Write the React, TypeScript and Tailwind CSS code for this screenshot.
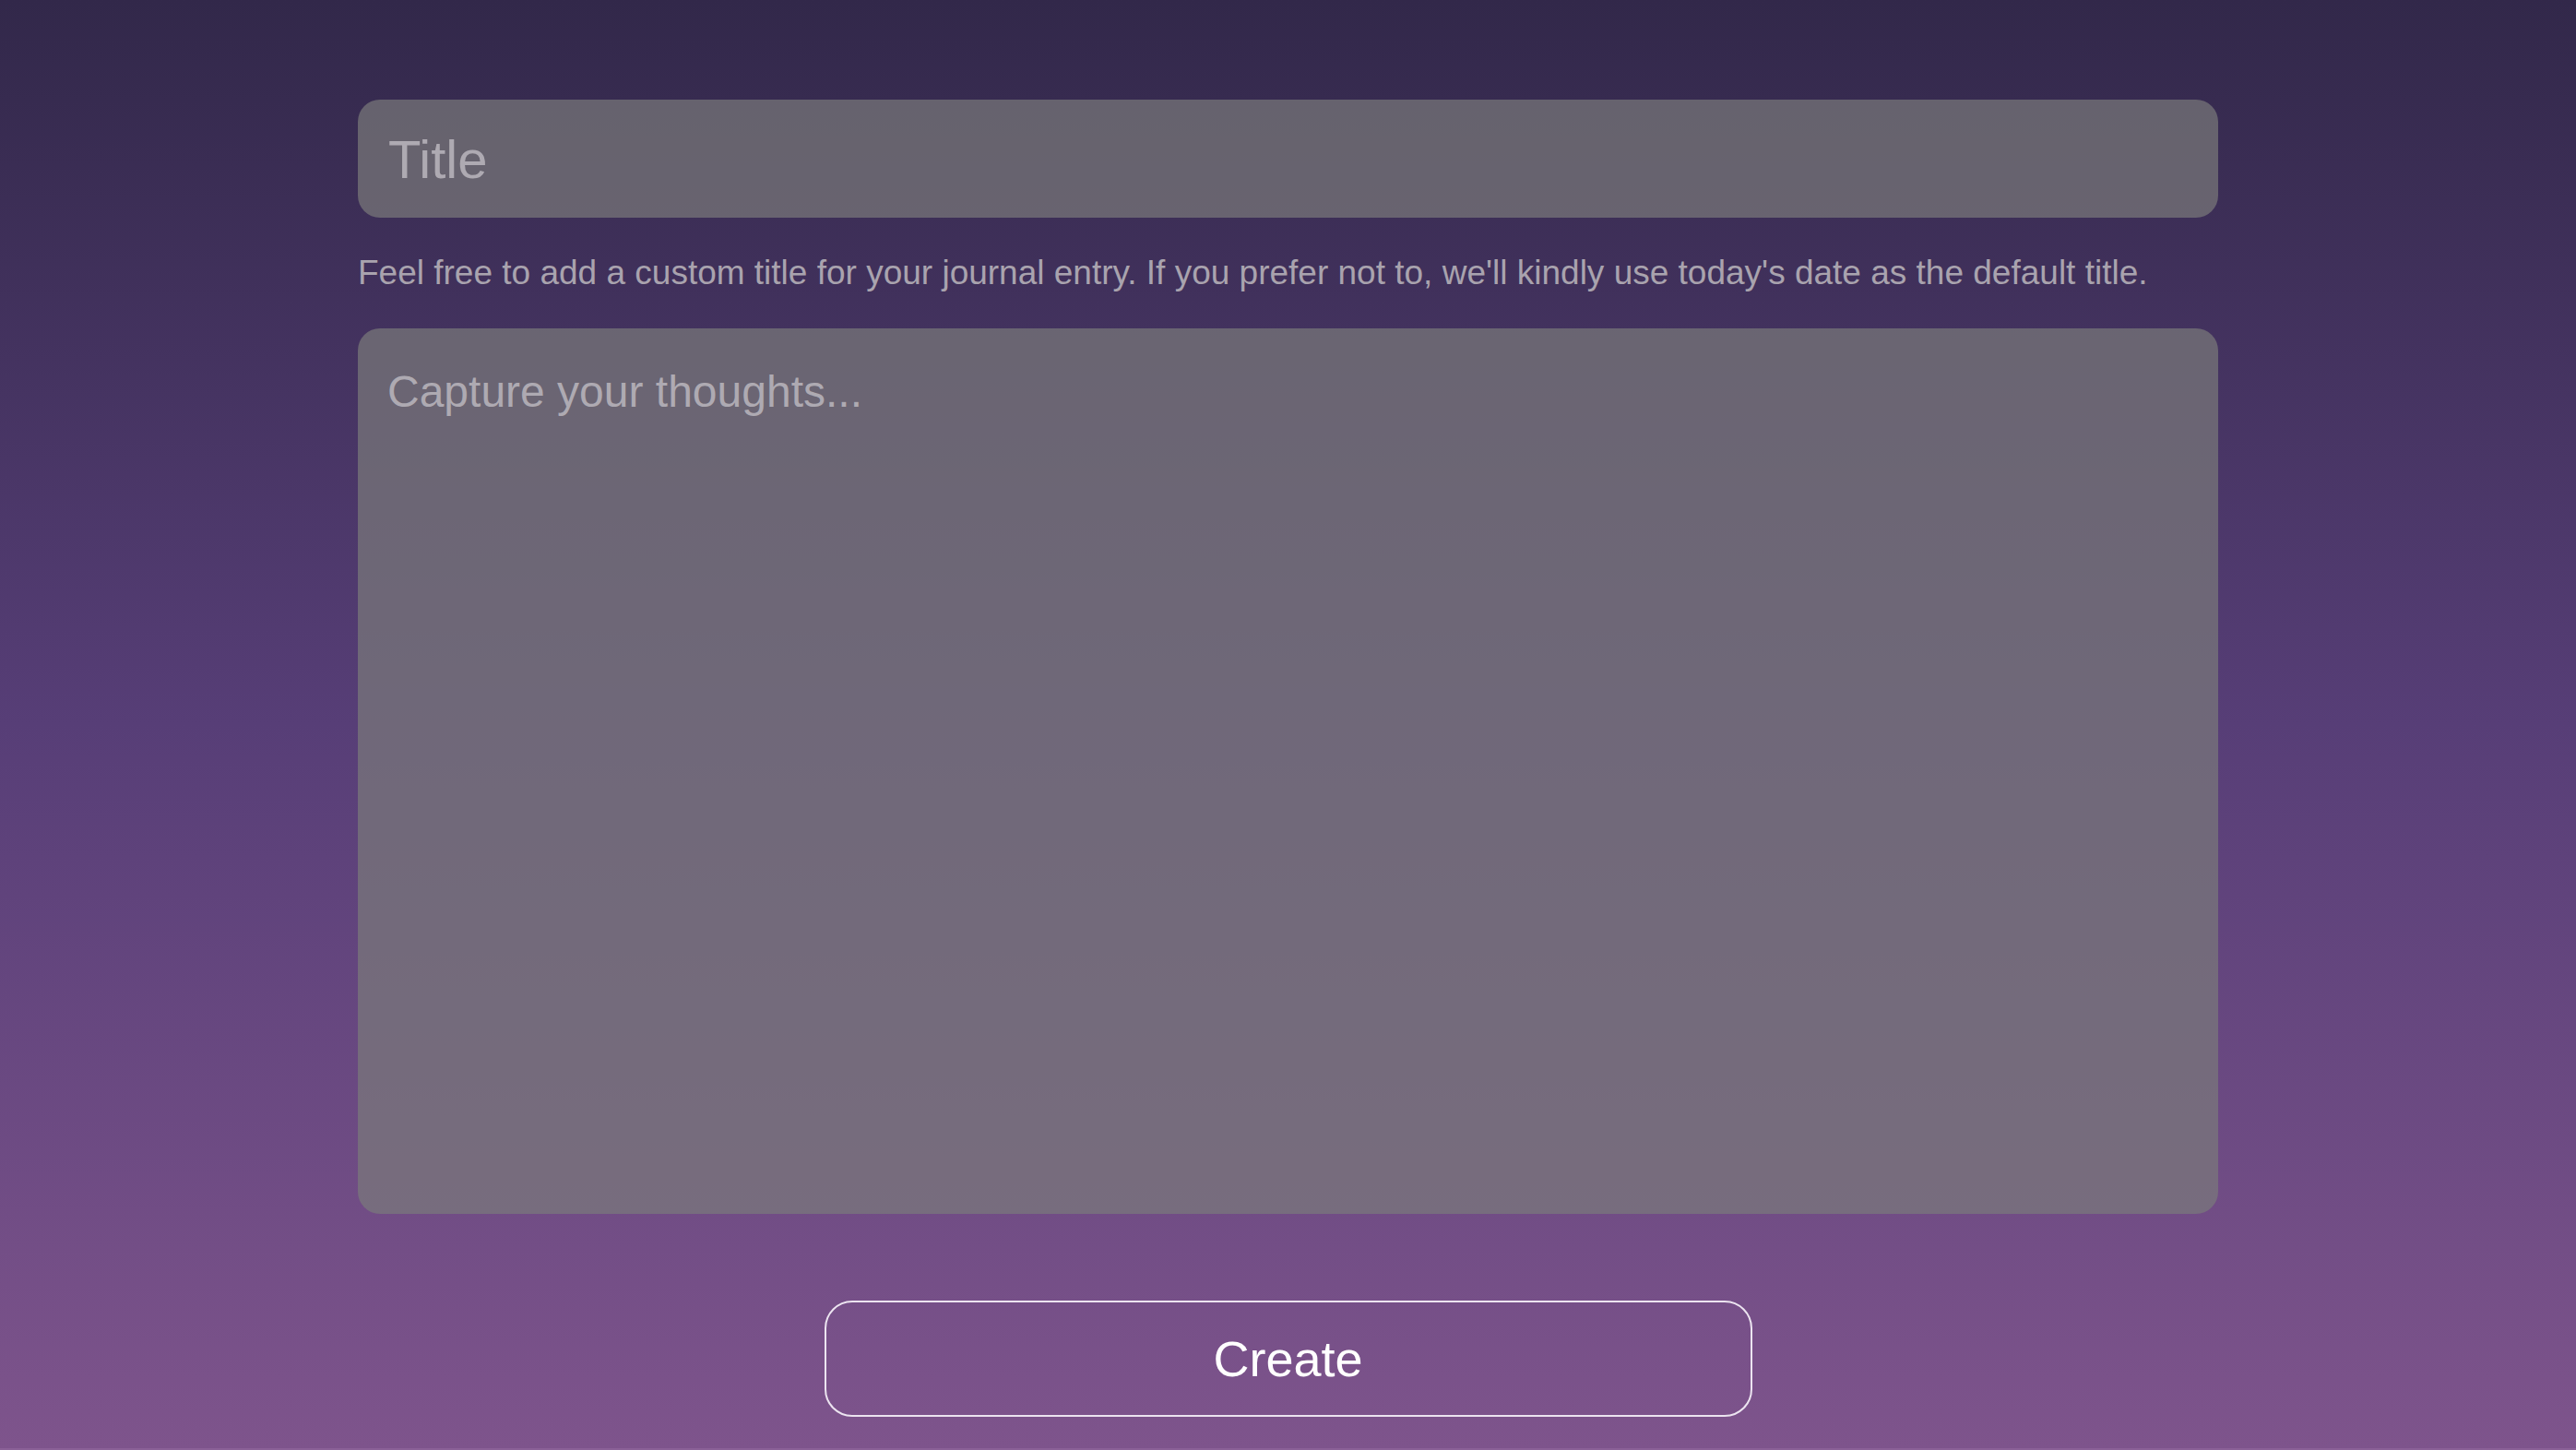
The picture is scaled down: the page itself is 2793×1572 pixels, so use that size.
import { useState } from "react";

export default function App() {
  const [title, setTitle] = useState("");
  const [body, setBody] = useState("");

  return (
    <div className="w-full min-h-screen bg-[#8a6197] font-['Liberation_Sans',Arial,sans-serif]">
      <main className="flex flex-col items-center w-full h-[1570px] pt-[108px] bg-linear-to-b from-[#32284a] via-[#573e77] to-[#7e548c]">
        <div className="flex flex-col w-[2017px]">
          <input
            value={title}
            onChange={(e) => setTitle(e.target.value)}
            placeholder="Title"
            className="w-full h-[128px] px-[33px] rounded-[24px] bg-[rgba(123,123,123,0.7)] text-[58px] text-[#eeeaf0] placeholder:text-[#aeaab2] outline-none"
          />
          <p className="mt-[39px] text-[37px] leading-[41px] text-[#a9a3ae]">
            Feel free to add a custom title for your journal entry. If you prefer not to, we'll kindly use today's date as the default title.
          </p>
          <textarea
            value={body}
            onChange={(e) => setBody(e.target.value)}
            placeholder="Capture your thoughts..."
            className="w-full h-[960px] mt-[40px] pt-[41px] px-[32px] rounded-[24px] bg-[rgba(123,123,123,0.7)] text-[48px] leading-[55px] text-[#eeeaf0] placeholder:text-[#aeaab2] outline-none resize-none"
          />
        </div>

        <button className="w-[1006px] h-[126px] mt-[94px] rounded-[30px] border-2 border-[#ece4f0] text-white text-[54px]">
          Create
        </button>
      </main>
    </div>
  );
}
